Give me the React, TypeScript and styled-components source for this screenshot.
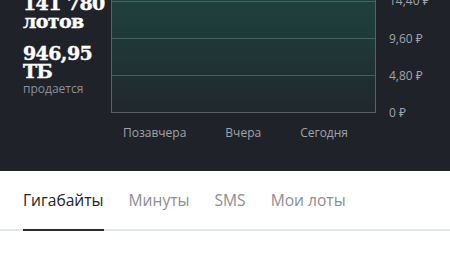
import styled, { createGlobalStyle } from "styled-components";

const GlobalStyle = createGlobalStyle`
  html, body {
    margin: 0;
    padding: 0;
    background: #ffffff;
    overflow: hidden;
  }
  body {
    font-family: "Open Sans", "Noto Sans", sans-serif;
  }
`;

const yLabels = ["19,20 ₽", "14,40 ₽", "9,60 ₽", "4,80 ₽", "0 ₽"];
const xLabels = ["Позавчера", "Вчера", "Сегодня"];
const tabs = ["Гигабайты", "Минуты", "SMS", "Мои лоты"];

const App = () => {
  return (
    <>
      <GlobalStyle />
      <Page>
        <Hero>
          <Stats>
            <StatBlock>
              <BigValue>141 780</BigValue>
              <BigValue>лотов</BigValue>
            </StatBlock>
            <StatBlock>
              <BigValue>946,95</BigValue>
              <BigValue>ТБ</BigValue>
              <Caption>продается</Caption>
            </StatBlock>
          </Stats>
          <ChartArea>
            <ChartBox>
              {[0, 1, 2, 3].map((i) => (
                <ChartRow key={i} $first={i === 0} />
              ))}
            </ChartBox>
            <YAxis>
              {yLabels.map((l) => (
                <AxisLabel key={l}>{l}</AxisLabel>
              ))}
            </YAxis>
            <XAxis>
              {xLabels.map((l) => (
                <AxisLabel key={l}>{l}</AxisLabel>
              ))}
            </XAxis>
          </ChartArea>
        </Hero>
        <TabBar>
          {tabs.map((t, i) => (
            <Tab key={t} $active={i === 0}>
              {t}
            </Tab>
          ))}
        </TabBar>
      </Page>
    </>
  );
};

const Page = styled.div`
  width: 450px;
  height: 253px;
  overflow: hidden;
  background: #ffffff;
`;

const Hero = styled.div`
  display: flex;
  margin-top: -36px;
  padding: 0 0 30px 23px;
  height: 207px;
  box-sizing: border-box;
  background: #1f2229;
`;

const Stats = styled.div`
  width: 88px;
  display: flex;
  flex-direction: column;
  gap: 14px;
  padding-top: 30px;
`;

const StatBlock = styled.div`
  display: flex;
  flex-direction: column;
`;

const BigValue = styled.div`
  font-family: "DejaVu Serif", serif;
  font-weight: bold;
  font-size: 19px;
  line-height: 18px;
  letter-spacing: -0.6px;
  color: #ffffff;
  -webkit-text-stroke: 0.4px #ffffff;
`;

const Caption = styled.div`
  margin-top: 1px;
  font-size: 12px;
  line-height: 16px;
  color: #8d9096;
`;

const ChartArea = styled.div`
  display: grid;
  grid-template-columns: 265px auto;
  grid-template-rows: 149px auto;
  column-gap: 13px;
`;

const ChartBox = styled.div`
  display: flex;
  flex-direction: column;
  border: 1px solid #5a6164;
  background: linear-gradient(to bottom, #1f4642 0%, #1f3b39 45%, #21272d 100%);
`;

const ChartRow = styled.div<{ $first: boolean }>`
  flex: 1;
  border-top: ${(p) => (p.$first ? "none" : "1px solid #46605d")};
`;

const YAxis = styled.div`
  display: flex;
  flex-direction: column;
  justify-content: space-between;
  margin: -8px 0;
`;

const XAxis = styled.div`
  display: flex;
  justify-content: space-between;
  padding: 0 28px 0 12px;
  margin-top: 12px;
`;

const AxisLabel = styled.div`
  font-size: 12px;
  line-height: 16px;
  color: #a1a4a9;
  white-space: nowrap;
`;

const TabBar = styled.div`
  display: flex;
  gap: 25px;
  padding: 0 23px;
  border-bottom: 2px solid #e2e6e6;
`;

const Tab = styled.div<{ $active: boolean }>`
  padding: 18px 0;
  margin-bottom: -2px;
  font-size: 15.6px;
  line-height: 22px;
  color: ${(p) => (p.$active ? "#222426" : "#8c8e90")};
  border-bottom: 2px solid ${(p) => (p.$active ? "#2a2c2f" : "transparent")};
`;

export default App;
